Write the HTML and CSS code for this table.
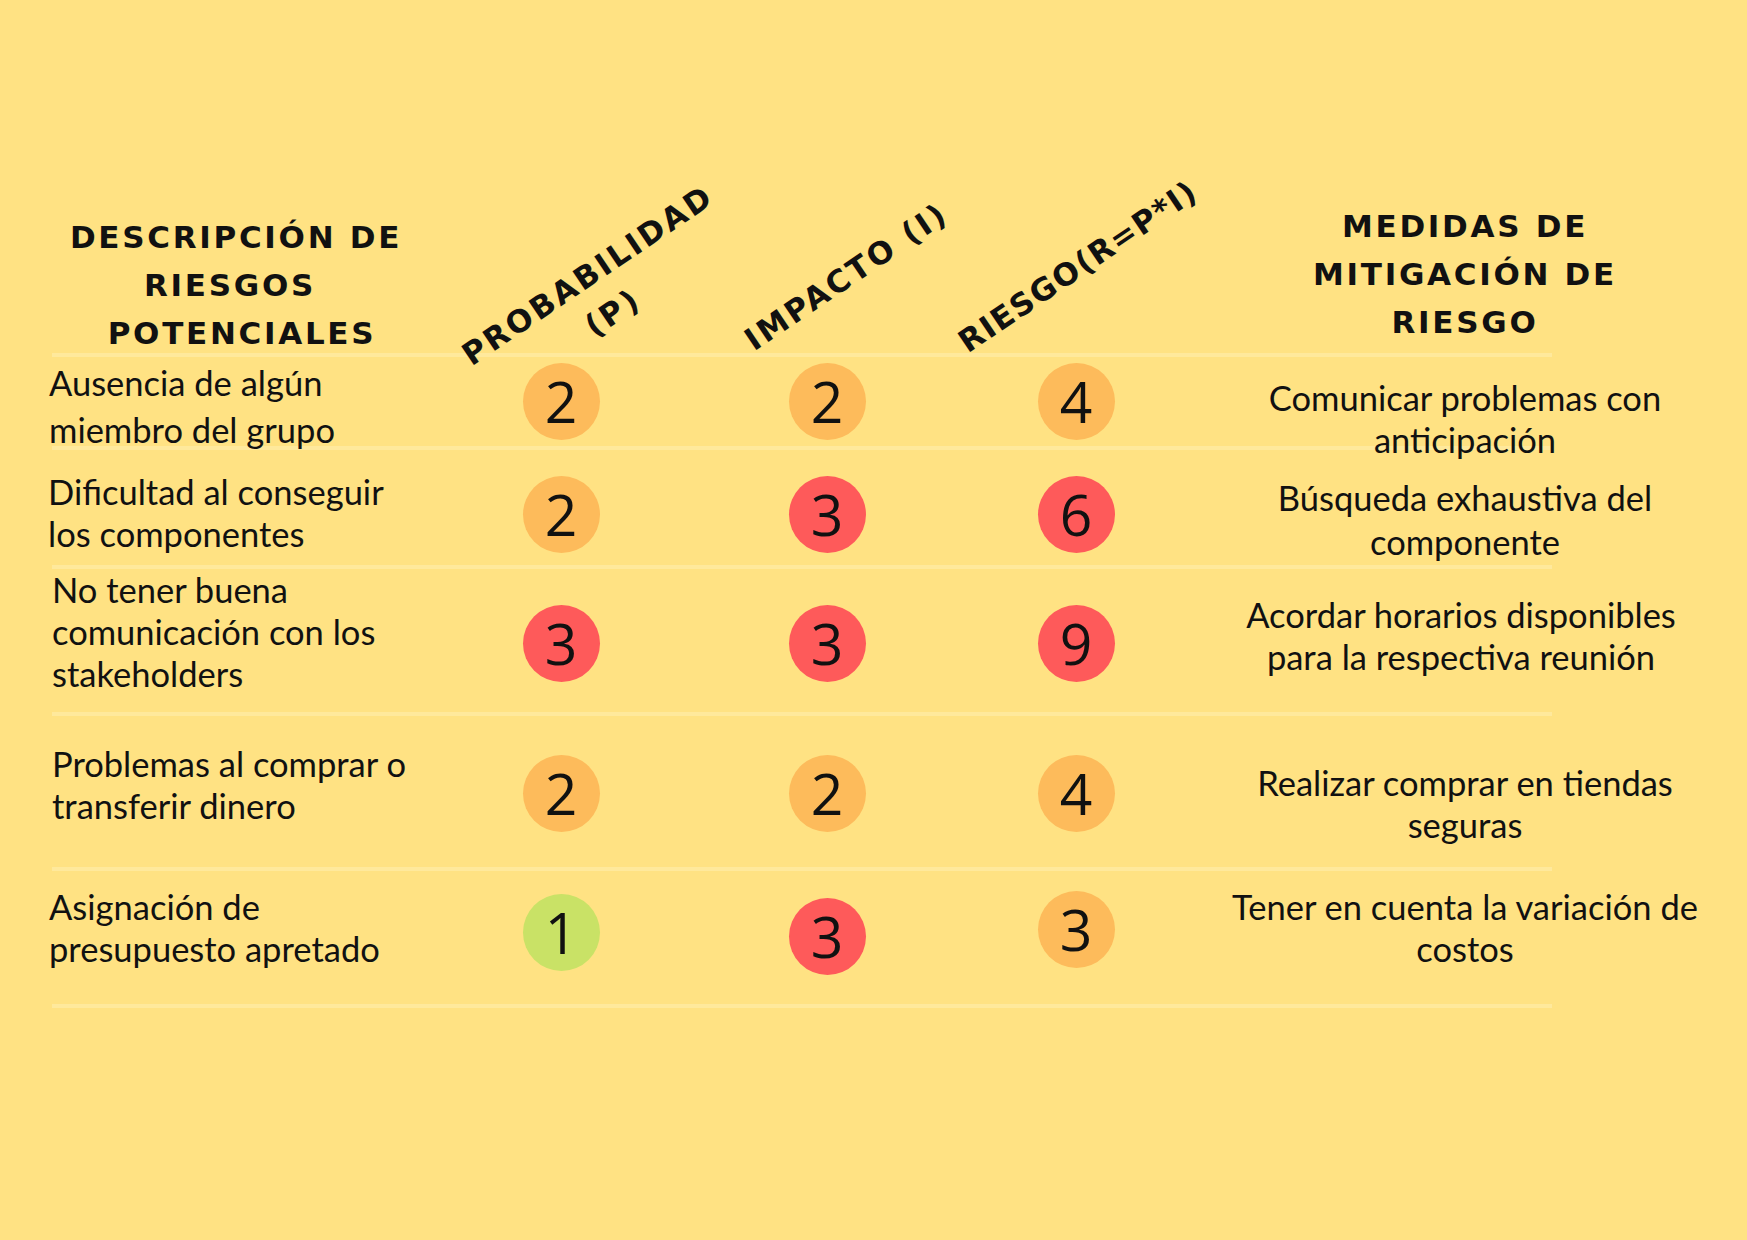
FILE: index.html
```html
<!DOCTYPE html>
<html lang="es">
<head>
<meta charset="utf-8">
<title>Matriz de riesgos</title>
<link rel="stylesheet" href="styles.css">
</head>
<body>
<main class="sheet">
  <div class="grid head">
    <div class="h-desc"><span class="hl">DESCRIPCIÓN DE</span><span class="hl hl-left">RIESGOS</span><span class="hl hl-right">POTENCIALES</span></div>
    <div class="h-rot c-p"><span class="rot">PROBABILIDAD<br>(P)</span></div>
    <div class="h-rot c-i"><span class="rot">IMPACTO (I)</span></div>
    <div class="h-rot c-r"><span class="rot">RIESGO(R=P*I)</span></div>
    <div class="h-meas">MEDIDAS DE<br>MITIGACIÓN DE<br>RIESGO</div>
  </div>
  <div class="rule"></div>

  <div class="grid row r1">
    <div class="desc">Ausencia de algún<br>miembro del grupo</div>
    <div class="cell c-p"><span class="dot orange">2</span></div>
    <div class="cell c-i"><span class="dot orange">2</span></div>
    <div class="cell c-r"><span class="dot orange">4</span></div>
    <div class="meas">Comunicar problemas con<br>anticipación</div>
  </div>
  <div class="rule"></div>

  <div class="grid row r2">
    <div class="desc">Dificultad al conseguir<br>los componentes</div>
    <div class="cell c-p"><span class="dot orange">2</span></div>
    <div class="cell c-i"><span class="dot red">3</span></div>
    <div class="cell c-r"><span class="dot red">6</span></div>
    <div class="meas">Búsqueda exhaustiva del<br>componente</div>
  </div>
  <div class="rule"></div>

  <div class="grid row r3">
    <div class="desc">No tener buena<br>comunicación con los<br>stakeholders</div>
    <div class="cell c-p"><span class="dot red">3</span></div>
    <div class="cell c-i"><span class="dot red">3</span></div>
    <div class="cell c-r"><span class="dot red">9</span></div>
    <div class="meas">Acordar horarios disponibles<br>para la respectiva reunión</div>
  </div>
  <div class="rule"></div>

  <div class="grid row r4">
    <div class="desc">Problemas al comprar o<br>transferir dinero</div>
    <div class="cell c-p"><span class="dot orange">2</span></div>
    <div class="cell c-i"><span class="dot orange">2</span></div>
    <div class="cell c-r"><span class="dot orange">4</span></div>
    <div class="meas">Realizar comprar en tiendas<br>seguras</div>
  </div>
  <div class="rule"></div>

  <div class="grid row r5">
    <div class="desc">Asignación de<br>presupuesto apretado</div>
    <div class="cell c-p"><span class="dot green">1</span></div>
    <div class="cell c-i"><span class="dot red">3</span></div>
    <div class="cell c-r"><span class="dot orange">3</span></div>
    <div class="meas">Tener en cuenta la variación de<br>costos</div>
  </div>
  <div class="rule"></div>
</main>
</body>
</html>
```
FILE: styles.css
```css
html, body {
  margin: 0;
  padding: 0;
}
body {
  width: 1747px;
  height: 1240px;
  background: #ffe283;
  color: #111;
  font-family: "Lato", "Liberation Sans", sans-serif;
  overflow: hidden;
}
.sheet {
  padding-left: 49px;
}
.grid {
  display: grid;
  grid-template-columns: 411px 202px 330px 168px 570px;
}

/* ---------- header ---------- */
.head {
  grid-template-rows: 353px;
  font-family: "DejaVu Sans", "Liberation Sans", sans-serif;
  font-weight: 700;
  font-size: 31px;
  letter-spacing: 2.7px;
  line-height: 48px;
  color: #111;
}
.h-desc {
  align-self: start;
  margin-top: 213px;
  padding-right: 37px;
  text-align: center;
}
.hl {
  display: block;
}
.hl-left { padding-right: 12px; }
.hl-right { padding-left: 12px; }
.h-meas {
  align-self: start;
  margin-top: 202px;
  padding-left: 40px;
  text-align: center;
}
.h-rot {
  display: flex;
  justify-content: center;
  align-items: flex-start;
}
.rot {
  display: block;
  white-space: nowrap;
  text-align: center;
  line-height: 45px;
  transform: rotate(-34deg);
}
.h-rot.c-p .rot { margin-top: 249px; margin-left: 78px; }
.h-rot.c-i .rot { margin-top: 254px; margin-left: 38px; }
.h-rot.c-r .rot { margin-top: 244px; margin-left: 5px; letter-spacing: 1.6px; }

/* ---------- rules ---------- */
.rule {
  width: 1500px;
  height: 4px;
  margin-left: 3px;
  background: #ffe99c;
}

/* ---------- body rows ---------- */
.row {
  align-items: center;
  font-size: 34.5px;
  line-height: 42px;
}
.r1 { grid-template-rows: 89px; }
.r2 { grid-template-rows: 115px; }
.r3 { grid-template-rows: 143px; }
.r4 { grid-template-rows: 151px; }
.r5 { grid-template-rows: 133px; }

.desc {
  white-space: nowrap;
}
.meas {
  padding-left: 40px;
  text-align: center;
  white-space: nowrap;
}
.cell {
  display: flex;
  justify-content: center;
}
.dot {
  width: 77px;
  height: 77px;
  border-radius: 50%;
  display: flex;
  align-items: center;
  justify-content: center;
  font-family: "Open Sans", "Liberation Sans", sans-serif;
  font-size: 57px;
  line-height: 1;
  color: #111;
}
.orange { background: #fdbb5b; }
.red { background: #fe5a5a; }
.green { background: #c9e266; }

/* per-row vertical placement (shift without changing the margin box) */
.r1 .desc { line-height: 47px; margin-top: 4px; margin-bottom: -4px; }
.r1 .meas { margin-top: 17px; margin-bottom: -17px; }
.r1 .cell { margin-top: 0; }
.r2 .desc { margin-top: 5px; margin-bottom: -5px; margin-left: -1px; }
.r2 .meas { line-height: 44px; margin-top: 12px; margin-bottom: -12px; }
.r2 .cell { margin-top: 7px; margin-bottom: -7px; }
.r3 .desc { margin-top: -9px; margin-bottom: 9px; margin-left: 3px; }
.r3 .meas { margin-top: -5px; margin-bottom: 5px; margin-right: 8px; }
.r3 .cell { margin-top: 3px; margin-bottom: -3px; }
.r4 .desc { margin-top: -7px; margin-bottom: 7px; margin-left: 3px; }
.r4 .meas { margin-top: 12px; margin-bottom: -12px; }
.r4 .cell { margin-top: 2px; margin-bottom: -2px; }
.r5 .desc { margin-top: -10px; margin-bottom: 10px; }
.r5 .meas { margin-top: -10px; margin-bottom: 10px; }
.r5 .c-p { margin-top: -5px; margin-bottom: 5px; }
.r5 .c-i { margin-top: -1px; margin-bottom: 1px; }
.r5 .c-r { margin-top: -8px; margin-bottom: 8px; }
```
